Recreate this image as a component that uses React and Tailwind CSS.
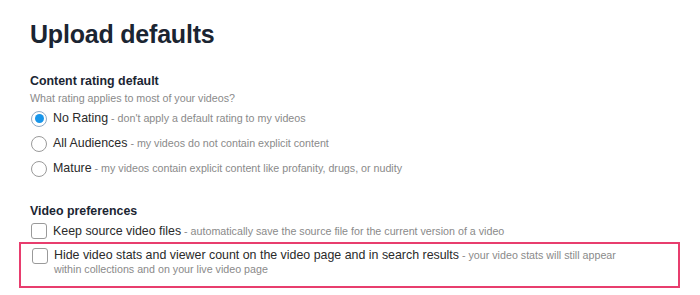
const ratings = [
  { label: "No Rating", note: "don't apply a default rating to my videos", checked: true },
  { label: "All Audiences", note: "my videos do not contain explicit content" },
  { label: "Mature", note: "my videos contain explicit content like profanity, drugs, or nudity" },
];

function Radio({ checked }) {
  return (
    <span
      className={
        "flex h-[16px] w-[16px] shrink-0 items-center justify-center rounded-full border bg-white " +
        (checked ? "border-[#8fa9c4]" : "border-[#9a9a9a]")
      }
    >
      {checked && <span className="h-[9px] w-[9px] rounded-full bg-[#1896ea]" />}
    </span>
  );
}

function Checkbox() {
  return <span className="h-[16px] w-[16px] shrink-0 rounded-[3px] border border-[#9a9a9a] bg-white" />;
}

export default function App() {
  return (
    <div className="h-[295px] w-[700px] overflow-hidden bg-white pl-[30px] pt-[19px] font-['Liberation_Sans',Arial,sans-serif]">
      <h1 className="text-[25px] font-bold leading-[30px] tracking-[-0.2px] text-[#1b2532]">Upload defaults</h1>

      <h2 className="mt-[24px] text-[12.4px] font-bold leading-[16px] text-[#1b2532]">Content rating default</h2>
      <p className="mt-[2px] text-[10.7px] leading-[14px] text-[#8a8a8a]">What rating applies to most of your videos?</p>

      <div className="mt-[1px]">
        {ratings.map((r) => (
          <div key={r.label} className="flex h-[25px] items-center gap-[6px] pl-px">
            <Radio checked={r.checked} />
            <span className="text-[12.4px] text-[#2a2a2a]">
              {r.label}
              <span className="text-[10.7px] text-[#8a8a8a]"> - {r.note}</span>
            </span>
          </div>
        ))}
      </div>

      <h2 className="mt-[22px] text-[12.4px] font-bold leading-[16px] text-[#1b2532]">Video preferences</h2>
      <div className="mt-[3px] flex h-[18px] items-center gap-[6px] pl-px">
        <Checkbox />
        <span className="text-[12.4px] text-[#2a2a2a]">
          Keep source video files
          <span className="text-[10.7px] text-[#8a8a8a]"> - automatically save the source file for the current version of a video</span>
        </span>
      </div>

      <div className="-ml-[11px] mt-[2px] flex h-[46px] w-[661px] gap-[6px] border-2 border-[#e83d6e] pl-[11px] pt-[4px]">
        <Checkbox />
        <p className="w-[585px] text-[12.4px] leading-[14px] text-[#2a2a2a]">
          Hide video stats and viewer count on the video page and in search results
          <span className="text-[10.7px] text-[#8a8a8a]"> - your video stats will still appear within collections and on your live video page</span>
        </p>
      </div>
    </div>
  );
}
